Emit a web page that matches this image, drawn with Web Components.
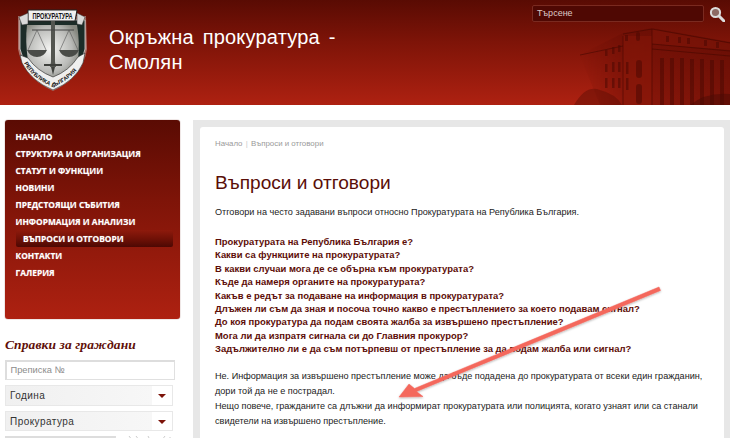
<!DOCTYPE html>
<html lang="bg"><head><meta charset="utf-8"><title>Въпроси и отговори</title>
<style>html,body{margin:0;padding:0;background:#fff;overflow:hidden;height:438px}body{font-family:"Liberation Sans",sans-serif}</style></head>
<body>
<site-page>
  <site-header slot="header"></site-header>
  <side-menu slot="side"></side-menu>
  <citizen-form slot="side"></citizen-form>
  <content-card slot="main"></content-card>
</site-page>
<arrow-mark></arrow-mark>
<script>
function def(name, html){
  customElements.define(name, class extends HTMLElement{
    constructor(){super();this.attachShadow({mode:'open'}).innerHTML=html;}
  });
}
def('site-page',`<style>
:host{display:block;width:730px;height:438px;overflow:hidden}
.body{display:flex;height:333px}
.side{width:193px;flex:none;display:flex;flex-direction:column;padding:15px 0 0 5px;box-sizing:border-box}
.main{flex:1;background:#e7e7e7;margin-top:15px;padding:7px 6px 0 7px;min-width:0}
</style><slot name="header"></slot><div class="body"><div class="side"><slot name="side"></slot></div><div class="main"><slot name="main"></slot></div></div>`);

def('site-header',`<style>
:host{display:block;height:105px;position:relative;overflow:hidden;background:linear-gradient(#590b03,#7e1408 40%,#ae2111);}
.row{display:flex;height:105px;box-sizing:border-box;padding:5px 0 0 17px}
h1{margin:20px 0 0 22px;font:400 20px/25px "Liberation Sans",sans-serif;color:#fff;width:250px;letter-spacing:.2px;word-spacing:3px}
.bld{position:absolute;left:570px;top:25px;width:160px;height:80px;filter:blur(.45px)}
.search{position:absolute;left:532px;top:5px;display:flex;align-items:center}
.box{width:172px;height:17px;box-sizing:border-box;background:#4f0803;border:1px solid #7a2a20;border-radius:2px;color:#ddc9c5;font:9px/15px "Liberation Sans",sans-serif;padding-left:4px}
.mag{margin-left:5px;width:16px;height:16px}
</style>
<svg class="bld" viewBox="570 25 160 80" aria-hidden="true">
 <defs><linearGradient id="f" x1="0" x2="1" y1="0" y2="0"><stop offset="0" stop-color="#6a0e05" stop-opacity="0"/><stop offset=".3" stop-color="#6a0e05" stop-opacity=".5"/><stop offset="1" stop-color="#5e0c04" stop-opacity=".65"/></linearGradient></defs>
 <path d="M580 55 L623 33 L652 28 L730 42 V105 H600 Z" fill="url(#f)"/>
 <path d="M623 36 H652 V105 H623Z" fill="#8c1a0b" opacity=".4"/>
 <path d="M652 29 L730 43 V50 L652 44Z" fill="#8c1a0b" opacity=".35"/>
 <path d="M580 55 L623 46 M623 34 L652 29 L730 43 M652 44 L730 51 M652 49 L730 56 M623 36 V105 M652 29 V105" fill="none" stroke="#460802" stroke-width="1" opacity=".6"/>
 <g fill="#470802" opacity=".5">
  <rect x="660" y="58" width="4" height="47"/><rect x="670" y="58" width="4" height="47"/><rect x="680" y="58" width="4" height="47"/><rect x="690" y="59" width="4" height="46"/><rect x="700" y="59" width="4" height="46"/><rect x="710" y="60" width="4" height="45"/><rect x="720" y="60" width="4" height="45"/>
  <rect x="636" y="60" width="6" height="18" rx="3"/><rect x="636" y="84" width="6" height="20" rx="3"/><rect x="626" y="62" width="2.5" height="12"/><rect x="626" y="78" width="2.5" height="12"/>
  <rect x="636" y="32" width="4" height="9" rx="2"/><rect x="625" y="35" width="3" height="6"/><rect x="666" y="36" width="3" height="6"/><rect x="678" y="37" width="3" height="6"/><rect x="687" y="38" width="3" height="6"/><rect x="704" y="40" width="3" height="6"/><rect x="716" y="42" width="3" height="6"/>
  <rect x="605" y="64" width="2.5" height="8"/><rect x="612" y="62" width="2.5" height="10"/><rect x="618" y="62" width="2.5" height="10"/><rect x="605" y="78" width="2.5" height="10"/><rect x="612" y="78" width="2.5" height="10"/><rect x="618" y="78" width="2.5" height="10"/><rect x="605" y="50" width="2.5" height="6"/><rect x="612" y="47" width="2.5" height="7"/><rect x="618" y="45" width="2.5" height="7"/>
 </g>
 <path d="M574 105 Q586 84 600 90 Q616 94 622 105Z" fill="#5a0e05" opacity=".45"/>
 <path d="M690 105 Q706 92 730 94 V105Z" fill="#4a0a04" opacity=".5"/>
</svg>
<div class="row">
<svg width="70" height="86" viewBox="0 0 70 86" aria-hidden="false">
 <defs>
  <radialGradient id="sh" cx=".45" cy=".45" r=".6"><stop offset="0" stop-color="#f4f4f2"/><stop offset=".7" stop-color="#b9bab7"/><stop offset="1" stop-color="#85877f"/></radialGradient>
  <path id="arc" d="M6 56 Q14 73 36 82 Q58 73 67 54"/>
 </defs>
 <path d="M1 11 L69 11 L70 44 Q66 72 36 86 Q6 72 1 44Z" fill="#d5c9c6" opacity=".5"/>
 <path d="M3 15 L68 15 L68 44 Q64 70 36 84 Q8 70 3 44Z" fill="#1c2c28" stroke="#ddd" stroke-width=".8"/>
 <path d="M10 20 L60 20 Q63 36 61 56 Q52 68 36 74 Q20 68 11 56 Q8 36 10 20Z" fill="url(#sh)"/>
 <path d="M11 5 H60 L58 16 L11 16Z" fill="#f0f0f0" stroke="#222" stroke-width="1"/>
 <path d="M2 12 L11 8 V19 L5 20Z M68 12 L60 8 V19 L65 20Z" fill="#d9d9d9" stroke="#333" stroke-width=".5"/>
 <text transform="translate(35.5 14) scale(1 1.5)" font-family="Liberation Sans" font-weight="700" font-size="5.6" text-anchor="middle" fill="#111">ПРОКУРАТУРА</text>
 <path d="M34 16 H38 V57 L39 62 H33 L34 57Z" fill="#535550"/>
 <path d="M27 59 H45 V61 H27Z M34 62 H38 L36 70Z" fill="#3f413d"/>
 <path d="M15 25 H57" stroke="#444" stroke-width="1.2"/>
 <path d="M20 25 L11 45 M20 25 L29 45 M52 25 L43 45 M52 25 L61 45" stroke="#555" stroke-width=".6" fill="none"/>
 <path d="M10 45 H30 Q27 52 20 52 Q13 52 10 45Z M42 45 H62 Q59 52 52 52 Q45 52 42 45Z" fill="#4a4c48"/>
 <path d="M3 50 L11 53 Q20 66 36 72 Q52 66 61 52 L68 48 L66 58 Q58 76 36 85 Q14 76 5 58Z" fill="#efefee" stroke="#222" stroke-width=".6"/>
 <text font-family="Liberation Sans" font-weight="700" font-size="5.6" fill="#111"><textPath href="#arc" startOffset="3%">РЕПУБЛИКА БЪЛГАРИЯ</textPath></text>
</svg>
<h1>Окръжна прокуратура - Смолян</h1>
</div>
<div class="search"><div class="box">Търсене</div>
<svg class="mag" viewBox="0 0 16 16" aria-hidden="true"><circle cx="6.5" cy="6.5" r="4.6" fill="#8d6a64" stroke="#ddd" stroke-width="2"/><path d="M10 10 L15 15" stroke="#ddd" stroke-width="3" stroke-linecap="round"/></svg></div>`);

def('side-menu',`<style>
:host{display:block;width:175px;height:199px;box-sizing:border-box;border-radius:3px;background:linear-gradient(#5a0b03,#7e1408 40%,#ae2111);padding:8px 0 0 0;flex:none;box-shadow:0 0 1px #5a0b03}
ul{list-style:none;margin:0;padding:0}
li{font:700 8.4px/17px "Open Sans","Liberation Sans",sans-serif;color:#fff;padding-left:10.5px;height:17px;white-space:nowrap;text-shadow:0 0 1px rgba(255,255,255,.5)}
li.on{margin-left:11px;margin-right:7px;padding-left:7px;border-radius:2px;background:linear-gradient(#8e1a0c,#6e1006 55%,#4c0803)}
</style><ul><li>НАЧАЛО</li><li>СТРУКТУРА И ОРГАНИЗАЦИЯ</li><li>СТАТУТ И ФУНКЦИИ</li><li>НОВИНИ</li><li>ПРЕДСТОЯЩИ СЪБИТИЯ</li><li>ИНФОРМАЦИЯ И АНАЛИЗИ</li><li class="on">ВЪПРОСИ И ОТГОВОРИ</li><li>КОНТАКТИ</li><li>ГАЛЕРИЯ</li></ul>`);

def('citizen-form',`<style>
:host{display:block;margin-top:17px;width:170px}
h2{margin:0 0 6px;font:italic 700 13.5px/18px "Liberation Serif",serif;color:#5f0f08;white-space:nowrap;letter-spacing:.1px}
.in{box-sizing:border-box;height:20px;background:#fff;border:1px solid #e0e0e0;border-top:2px solid #ddd;border-left:2px solid #ddd;color:#8c8c8c;font:9.3px/16px "Liberation Sans",sans-serif;padding-left:3.5px;margin-bottom:5px}
.sel{box-sizing:border-box;height:20.5px;width:168px;border:1px solid #e8e8e8;display:flex;justify-content:space-between;margin-bottom:5px;padding-left:4px;color:#333;font:10px/20px "Liberation Sans",sans-serif;letter-spacing:.45px;background:linear-gradient(90deg,#f0f0f0,#f7f7f7 88%,#fff 88%)}
.sel i{width:0;height:0;border:4px solid transparent;border-top:4px solid #7c1309;border-bottom:0;margin:8px 6px 0 0}
.last{display:flex;gap:8px;align-items:flex-start}
.cap{box-sizing:border-box;width:111px;height:20px;background:#fff;border-top:2px solid #ddd;border-left:2px solid #ddd;border-right:1px solid #e0e0e0;flex:none}
svg{flex:none}
</style><h2>Справки за граждани</h2><div class="in">Преписка №</div><div class="sel">Година<i></i></div><div class="sel">Прокуратура<i></i></div><div class="last"><div class="cap"></div><svg width="50" height="6" aria-hidden="true"><path d="M5 0l3 4M12 0l3 4M24 0l2 4M38 4l3-4M46 1v3" stroke="#ccc" fill="none"/></svg></div>`);

def('q-list',`<style>
:host{display:block}
a{display:block;font:700 9.45px/13.4px "Liberation Sans",sans-serif;color:#5d0d07;white-space:nowrap}
</style><a>Прокуратурата на Република България е?</a><a>Какви са функциите на прокуратурата?</a><a>В какви случаи мога де се обърна към прокуратурата?</a><a>Къде да намеря органите на прокуратурата?</a><a>Какъв е редът за подаване на информация в прокуратурата?</a><a>Длъжен ли съм да зная и посоча точно какво е престъплението за което подавам сигнал?</a><a>До коя прокуратура да подам своята жалба за извършено престъпление?</a><a>Мога ли да изпратя сигнала си до Главния прокурор?</a><a>Задължително ли е да съм потърпевш от престъпление за да подам жалба или сигнал?</a>`);

def('content-card',`<style>
:host{display:block;background:#fff;height:320px;border-radius:3px 3px 0 0;box-sizing:border-box;padding:11px 15px 0 15px;color:#222}
.bc{font:7.9px/12px "Liberation Sans",sans-serif;color:#9a9a9a}
.bc span{color:#ccc;margin:0 1px}
h1{margin:19px 0 0;font:400 19.1px/28px "Liberation Sans",sans-serif;color:#5a0e08}
p{margin:0;font:9.1px/15px "Liberation Sans",sans-serif;color:#222;white-space:nowrap}
.lead{margin-top:8px;margin-bottom:15px}
.ans{margin-top:13px}
</style><div class="bc">Начало <span>|</span> Въпроси и отговори</div>
<h1>Въпроси и отговори</h1>
<p class="lead">Отговори на често задавани въпроси относно Прокуратурата на Република България.</p>
<q-list></q-list>
<div class="ans"><p>Не. Информация за извършено престъпление може да бъде подадена до прокуратурата от всеки един гражданин,<br>дори той да не е пострадал.<br>Нещо повече, гражданите са длъжни да информират прокуратурата или полицията, когато узнаят или са станали<br>свидетели на извършено престъпление.</p></div>`);

def('arrow-mark',`<style>:host{position:absolute;left:0;top:0;width:730px;height:438px;pointer-events:none;display:block}</style>
<svg width="730" height="438" aria-hidden="true"><defs><filter id="s" x="-10%" y="-10%" width="120%" height="120%"><feDropShadow dx="0" dy="1" stdDeviation="1" flood-color="#000" flood-opacity=".3"/></filter></defs>
<g filter="url(#s)"><path d="M659 287 L660.5 290.5 L416.5 391.5 L423 396.5 L399 397 L409 384 L414.5 388.5 Z" fill="#f4675c" stroke="#f4675c" stroke-width=".5" stroke-linejoin="round"/></g></svg>`);
</script>
</body></html>
